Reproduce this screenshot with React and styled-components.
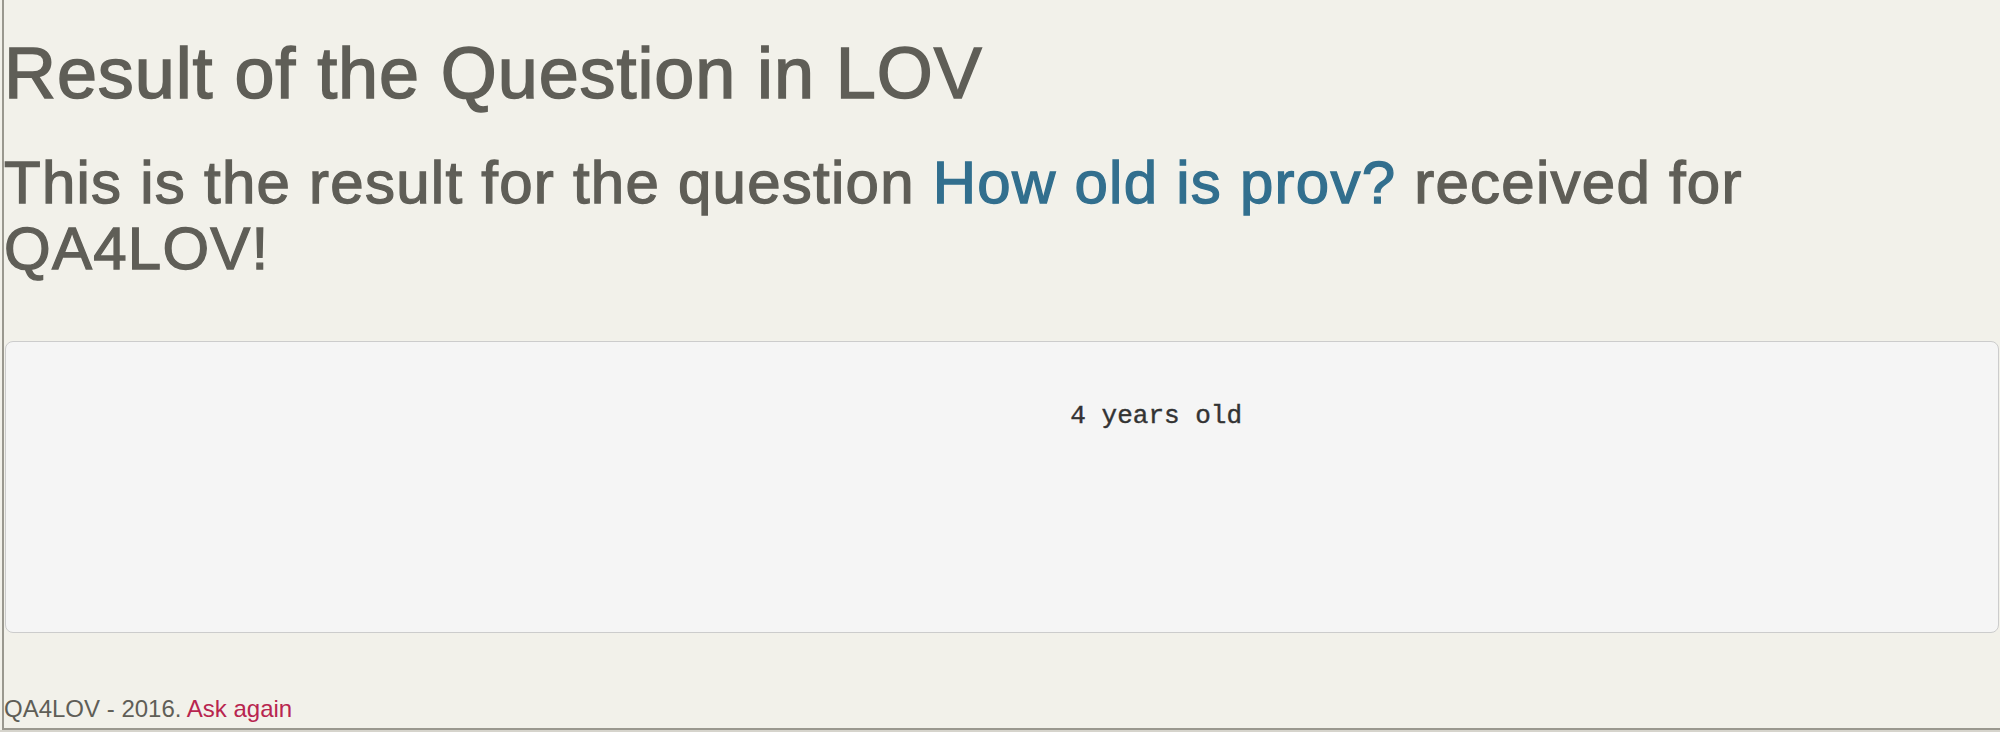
import styled, { createGlobalStyle } from 'styled-components';

const GlobalStyle = createGlobalStyle`
  html {
    background: #d6d4cc;
  }
  body {
    margin: 0;
    font-family: "Liberation Sans", Arial, sans-serif;
    color: #5f5e57;
  }
`;

const Page = styled.div`
  background: #f2f1ea;
  padding-left: 2px;
`;

const Frame = styled.div`
  height: 730px;
  box-sizing: border-box;
  border-left: 2px solid #9a988f;
  border-bottom: 2px solid #9a988f;
  display: flex;
  flex-direction: column;
`;

// headings are a medium weight in the original; thicken the regular face a bit
const Title = styled.h1`
  margin: 34px 0 0;
  font-size: 72px;
  font-weight: 400;
  line-height: 1.1;
  letter-spacing: 0.9px;
  -webkit-text-stroke: 1.5px currentColor;
`;

const Subtitle = styled.h2`
  margin: 37px 0 0;
  font-size: 60px;
  font-weight: 400;
  line-height: 1.1;
  letter-spacing: 1.25px;
  -webkit-text-stroke: 1.3px currentColor;
`;

const Question = styled.a`
  color: #326f8e;
  text-decoration: none;
`;

const ResultBox = styled.pre`
  margin: 59px 1px 0 1px;
  height: 292px;
  box-sizing: border-box;
  padding: 19px;
  background: #f5f5f5;
  border: 1px solid #cccccc;
  border-radius: 8px;
  color: #333333;
  font-family: "Liberation Mono", "DejaVu Sans Mono", monospace;
  font-size: 26px;
  line-height: 1.42857;
  -webkit-text-stroke: 0.4px currentColor;
  overflow: hidden;
`;

const Footer = styled.footer`
  margin-top: auto;
  padding-bottom: 2px;
  font-size: 24px;
  line-height: 1.42857;
`;

const AskLink = styled.a`
  color: #b8254f;
  text-decoration: none;
`;

const answer = '\n' + ' '.repeat(67) + '4 years old';

export default function App() {
  return (
    <>
      <GlobalStyle />
      <Page>
        <Frame>
          <Title>Result of the Question in LOV</Title>
          <Subtitle>
            This is the result for the question{' '}
            <Question href="#">How old is prov?</Question> received for QA4LOV!
          </Subtitle>
          <ResultBox>{answer}</ResultBox>
          <Footer>
            QA4LOV - 2016. <AskLink href="#">Ask again</AskLink>
          </Footer>
        </Frame>
      </Page>
    </>
  );
}
